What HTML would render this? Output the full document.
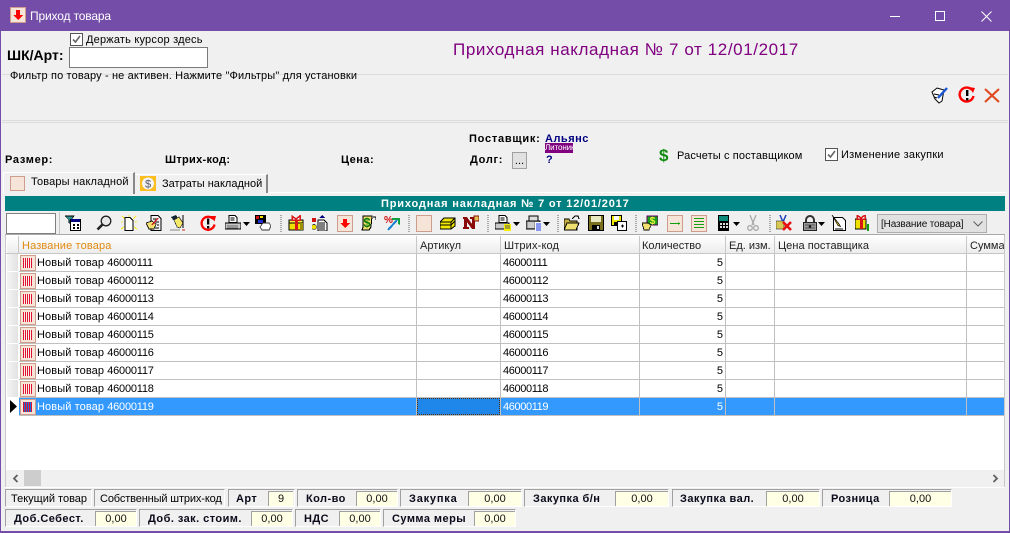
<!DOCTYPE html>
<html><head><meta charset="utf-8"><title>Приход товара</title>
<style>
html,body{margin:0;padding:0;width:1010px;height:533px;overflow:hidden;background:#f0f0f0}
body{position:relative;font:11px/14px "Liberation Sans",sans-serif;color:#000}
.a,.t,svg.i{position:absolute}
.t{white-space:nowrap}
svg.i{width:16px;height:16px;top:215px;shape-rendering:crispEdges}
.b{font-weight:bold}
.l{position:absolute;height:1px;background:#dcdcdc;left:2px;right:2px}
.sep{position:absolute;top:215px;width:2px;height:17px;background:repeating-linear-gradient(#a8a8a8 0 1px,#f0f0f0 1px 2px)}
.btn{position:absolute;top:215px;width:14px;height:15px;border:1px solid #cf9d8b;background:#f6e4d8}
.v{position:absolute;top:254px;width:1px;height:162px;background:#c0c0c0}
.r{position:absolute;left:19px;width:985px;height:1px;background:#c0c0c0}
.ind{position:absolute;left:7px;width:11px;height:17px;background:linear-gradient(90deg,#f4f4f4,#e2e2e2)}
.ic{position:absolute;left:20px;width:14px;height:14px;border:1px solid #cf9d8b;background:#f6e4d8}
.ic:after{content:"";position:absolute;left:2px;top:2px;width:9px;height:10px;background-image:linear-gradient(90deg,#e01030 50%,#f9f0ea 50%);background-size:2px 100%}
.ic.s:after{background-image:linear-gradient(90deg,#e01030 50%,#1e70d8 50%)}
.n{position:absolute;left:37px;letter-spacing:.1px}
.n span{letter-spacing:-.22px}
.c{position:absolute;left:503px;letter-spacing:-.37px}
.q{position:absolute;right:287px;width:20px;text-align:right}
.h{position:absolute;top:239px;color:#222}
.p{position:absolute;box-sizing:border-box;height:18px;border:1px solid;border-color:#a0a0a0 #fff #fff #a0a0a0;background:#f0f0f0}
.pt{position:absolute;white-space:nowrap}
.val{position:absolute;box-sizing:border-box;height:15px;background:#ffffe6;border-top:1px solid #a0a0a0;border-left:1px solid #a0a0a0;text-align:center;line-height:15px;color:#111}
.lb{position:absolute;font-weight:bold;white-space:nowrap;letter-spacing:.45px;color:#0a0a1a}
</style></head><body>

<div class="a" style="left:0;top:0;width:1010px;height:31px;background:#744da9"></div>
<div class="a" style="left:0;top:31px;width:1px;height:502px;background:#744da9"></div>
<div class="a" style="left:1009px;top:31px;width:1px;height:502px;background:#744da9"></div>
<div class="a" style="left:0;top:531px;width:1010px;height:2px;background:#744da9"></div>

<svg class="a" style="left:10px;top:7px" width="16" height="16" viewBox="0 0 16 16" shape-rendering="crispEdges"><rect x=".5" y=".5" width="15" height="15" fill="#f6e4d8" stroke="#cf9d8b"/><path d="M6 3h4v5h3l-5 5-5-5h3z" fill="#f00"/></svg>
<div class="t" style="left:30px;top:9px;font-size:12px;color:#fff;letter-spacing:-.15px">Приход товара</div>
<div class="a" style="left:890px;top:16px;width:10px;height:1px;background:#fff"></div>
<div class="a" style="left:935px;top:11px;width:8px;height:8px;border:1px solid #fff"></div>
<svg class="a" style="left:981px;top:11px" width="11" height="11" viewBox="0 0 11 11"><path d="M.5.5l10 10M10.500.5l-10 10" stroke="#fff" fill="none"/></svg>

<div class="a" style="left:70px;top:33px;width:11px;height:11px;border:1px solid #555;background:#fff"></div>
<svg class="a" style="left:71px;top:34px" width="11" height="11" viewBox="0 0 11 11"><path d="M2 5.500l2.500 2.500 4.500-6" stroke="#666" stroke-width="1.600" fill="none"/></svg>
<div class="t" style="left:86px;top:33px;letter-spacing:.2px">Держать курсор здесь</div>
<div class="t b" style="left:7px;top:48px;font-size:14px">ШК/Арт:</div>
<div class="a" style="left:69px;top:47px;width:137px;height:19px;border:1px solid #7a7a7a;background:#fff"></div>
<div class="t" style="left:453px;top:40px;font-size:17px;line-height:20px;color:#800080;letter-spacing:.6px">Приходная накладная № 7 от 12/01/2017</div>

<div class="l" style="top:74px"></div>
<div class="t" style="left:10px;top:69px;letter-spacing:.14px">Фильтр по товару - не активен. Нажмите "Фильтры" для установки</div>
<div class="l" style="top:120px"></div>
<div class="l" style="top:122px"></div>

<svg class="a" style="left:931px;top:86px" width="18" height="18" viewBox="0 0 18 18"><path d="M1 6l5-4 7 2-2 11-3 2-4-4z" fill="#fff" stroke="#000"/><path d="M7 12l9-10" stroke="#1a55d0" stroke-width="2.400"/><path d="M3 8l5 1M3 11l3 1" stroke="#000"/></svg>
<svg class="a" style="left:958px;top:86px" width="18" height="18" viewBox="0 0 18 18"><path d="M14 4a7 7 0 1 0 1.500 6" fill="none" stroke="#f00" stroke-width="2.400"/><path d="M11 1l6 1-2 5z" fill="#f00"/><path d="M8 4h2.400v6H8zM8 12h2.400v2.400H8z" fill="#000"/></svg>
<svg class="a" style="left:984px;top:88px" width="16" height="15" viewBox="0 0 16 15"><path d="M1 1l14 13M15 1L1 14" stroke="#e04a20" stroke-width="2.200" fill="none"/></svg>

<div class="t b" style="left:469px;top:132px;letter-spacing:.75px">Поставщик:</div>
<div class="t b" style="left:545px;top:132px;color:#000080;letter-spacing:.5px">Альянс</div>
<div class="a" style="left:545px;top:143px;width:28px;height:10px;background:#800080;color:#fff;font-size:8px;line-height:10px;overflow:hidden;white-space:nowrap;letter-spacing:-.1px">Литоник</div>
<div class="t b" style="left:470px;top:153px;letter-spacing:.7px">Долг:</div>
<div class="a" style="left:512px;top:152px;width:13px;height:15px;border:1px solid #a0a0a0;background:#e1e1e1;line-height:17px;text-align:center">...</div>
<div class="t b" style="left:546px;top:153px;color:#000080">?</div>
<div class="t" style="left:659px;top:147px;font-size:17px;line-height:18px;font-weight:bold;color:#108a10">$</div>
<div class="t" style="left:677px;top:149px;letter-spacing:.13px">Расчеты с поставщиком</div>
<div class="a" style="left:825px;top:148px;width:11px;height:11px;border:1px solid #555;background:#fff"></div>
<svg class="a" style="left:826px;top:149px" width="11" height="11" viewBox="0 0 11 11"><path d="M2 5.500l2.500 2.500 4.500-6" stroke="#666" stroke-width="1.600" fill="none"/></svg>
<div class="t" style="left:841px;top:148px;letter-spacing:.24px">Изменение закупки</div>

<div class="t b" style="left:5px;top:153px;letter-spacing:.7px">Размер:</div>
<div class="t b" style="left:165px;top:153px;letter-spacing:.3px">Штрих-код:</div>
<div class="t b" style="left:341px;top:153px;letter-spacing:.5px">Цена:</div>

<div class="a" style="left:3px;top:192px;width:1003px;height:1px;background:#fff"></div>
<div class="a" style="left:134px;top:174px;width:131px;height:18px;background:#f0f0f0;border:1px solid #fff;border-right:2px solid #888;border-bottom:0"></div>
<div class="a" style="left:3px;top:172px;width:129px;height:21px;background:#f0f0f0;border:1px solid #fff;border-right:2px solid #888;border-bottom:0"></div>
<div class="a" style="left:10px;top:176px;width:13px;height:13px;border:1px solid #cf9d8b;background:#f6e4d8"></div>
<div class="t" style="left:31px;top:175px;letter-spacing:.15px">Товары накладной</div>
<svg class="a" style="left:140px;top:176px" width="16" height="16" viewBox="0 0 16 16"><rect width="16" height="15" fill="#fbbe1e"/><circle cx="8" cy="7.500" r="6" fill="#f4f4f4"/><text x="8" y="11.500" text-anchor="middle" font-family="Liberation Sans" font-size="11" fill="#556">$</text></svg>
<div class="t" style="left:162px;top:177px;letter-spacing:.02px">Затраты накладной</div>

<div class="a" style="left:5px;top:196px;width:1000px;height:15px;background:#008080"></div>
<div class="t b" style="left:381px;top:197px;color:#fff;letter-spacing:.82px">Приходная накладная № 7 от 12/01/2017</div>

<div class="a" style="left:6px;top:213px;width:48px;height:19px;border:1px solid #808080;background:#fff"></div>
<div class="a" style="left:59px;top:212px;width:1px;height:22px;background:#c4c4c4"></div>

<!-- toolbar -->
<svg class="i" style="left:65px" viewBox="0 0 16 16"><path d="M0 1h9L6 5v4L4 8V5z" fill="#2f8f8f" stroke="#000" stroke-width=".6"/><rect x="5.500" y="4.500" width="10" height="11" fill="#fff" stroke="#000"/><rect x="6" y="4" width="9" height="3" fill="#000080"/><path d="M8 9h2v2H8zM12 9h2v2h-2zM8 12h2v2H8zM12 12h2v2h-2z" fill="#000"/></svg>
<svg class="i" style="left:96px;shape-rendering:auto" viewBox="0 0 16 16"><circle cx="10" cy="6" r="4.800" fill="#e8e8e8" stroke="#222" stroke-width="1.300"/><path d="M6.500 9.500L1.500 14.500" stroke="#222" stroke-width="2.600"/></svg>
<svg class="i" style="left:121px" viewBox="0 0 16 16"><path d="M1 1l3 3M15 1l-3 3M0 14l3-2M16 14l-3-2M8 0v2M0 7h2M14 7h2" stroke="#f8e820" stroke-width="1.200"/><path d="M4 2.500h5l3 3v10H4z" fill="#fff" stroke="#000"/></svg>
<svg class="i" style="left:146px" viewBox="0 0 16 16"><path d="M5 .5h7l3 3v12H5z" fill="#f0f0f0" stroke="#000"/><path d="M7 4h5M9 7h4M11 10h2M9 13h4" stroke="#000"/><path d="M0 8l6-2 4 3-2 5H3z" fill="#f2e070" stroke="#000" stroke-width=".7"/><path d="M6 10L12 3" stroke="#d02020" stroke-width="1.400"/></svg>
<svg class="i" style="left:170px" viewBox="0 0 16 16"><path d="M1 2l5-2 2 3-4 3z" fill="#123"/><path d="M4 5l5-3 4 6-3 5-3-1z" fill="#f6e868" stroke="#333" stroke-width=".7"/><path d="M13 0v13" stroke="#000"/><path d="M0 15h10" stroke="#888"/><path d="M12 15h3" stroke="#d02020"/></svg>
<svg class="i" style="left:200px;shape-rendering:auto" viewBox="0 0 16 16"><path d="M13 4a6.500 6.500 0 1 0 1.500 5.500" fill="none" stroke="#f00" stroke-width="2.300"/><path d="M10 1l6 0-1.500 5.500z" fill="#f00"/><path d="M7 3.500h2.300v6H7zM7 11h2.300v2.400H7z" fill="#000"/></svg>
<svg class="i" style="left:225px" viewBox="0 0 16 16"><path d="M4 .5h6l2 2v5H4z" fill="#fff" stroke="#000"/><path d="M5.500 3h4M5.500 5h4" stroke="#000"/><path d="M0 8h16v6H0z" fill="#c8c8c8" stroke="#000" stroke-width=".8"/><path d="M2 11h11M2 13h11" stroke="#666"/></svg>
<svg class="a" style="left:243px;top:222px" width="7" height="4"><path d="M0 0h7L3.500 4z"/></svg>
<svg class="i" style="left:255px" viewBox="0 0 16 16"><rect x="0" y="0" width="11" height="9" fill="#000"/><rect x="1" y="1" width="3" height="3" fill="#d01010"/><rect x="5" y="1" width="3" height="2" fill="#f0e000"/><rect x="3" y="5" width="5" height="3" fill="#2030d0"/><path d="M8 8h6l2 3-2 4H7l-2-3z" fill="#fff" stroke="#333" stroke-width=".8"/></svg>
<div class="sep" style="left:280px"></div>
<svg class="i" style="left:288px" viewBox="0 0 16 16"><rect x="1" y="5" width="14" height="10" fill="#f0e000" stroke="#000"/><rect x="1" y="5" width="14" height="3" fill="#f8f040" stroke="#000"/><path d="M7 5h3v10H7z" fill="#d81818"/><path d="M4 1l4 3 4-3v4H4z" fill="none" stroke="#d81818" stroke-width="1.500"/><rect x="12" y="8" width="3" height="7" fill="#a09000"/></svg>
<svg class="i" style="left:312px" viewBox="0 0 16 16"><rect x="0" y="3" width="4" height="4" fill="#d01010"/><circle cx="2" cy="12" r="2.500" fill="#f0e000" stroke="#000" stroke-width=".6"/><path d="M6 5h6l3 3v8H6z" fill="#fff" stroke="#000"/><path d="M7 8h6M7 10h6M7 12h6M7 14h6" stroke="#000"/><path d="M7 3l3-3 3 3z" fill="#000080"/></svg>
<div class="btn" style="left:337px"></div>
<svg class="a" style="left:338px;top:216px" width="14" height="15" viewBox="0 0 14 15" shape-rendering="crispEdges"><path d="M5 3h4v4h3l-5 5-5-5h3z" fill="#f00"/></svg>
<svg class="i" style="left:360px" viewBox="0 0 16 16"><path d="M3 1h9l-1 11-2 3H2l1-3z" fill="#f0e070" stroke="#000"/><path d="M13 2h3v3" fill="none" stroke="#000"/><text x="7" y="12" text-anchor="middle" font-family="Liberation Sans" font-weight="bold" font-size="13" fill="#0a7a0a">$</text></svg>
<svg class="i" style="left:384px" viewBox="0 0 16 16"><text x="0" y="8" font-family="Liberation Sans" font-weight="bold" font-size="10" fill="#d01010">%</text><path d="M4 15L13 5" stroke="#1a80d0" stroke-width="2"/><path d="M8 3h8v7l-2-1V5H8z" fill="#10a040"/></svg>
<div class="sep" style="left:408px"></div>
<div class="btn" style="left:416px"></div>
<svg class="i" style="left:440px" viewBox="0 0 16 16"><path d="M4 3h11v8l-4 3H0V7z" fill="#f0e800" stroke="#000"/><path d="M0 7h11l4-4M0 10h11l4-4" fill="none" stroke="#000"/><path d="M11 7v7" stroke="#000"/></svg>
<svg class="i" style="left:463px" viewBox="0 0 16 16"><path d="M0 2h4l5 7V4H7V2h5v12H9L4 7v5h2v2H0v-2h1V4H0z" fill="#8a0a0a"/><rect x="11" y="1" width="5" height="5" fill="#e0c050" stroke="#8a0a0a"/></svg>
<div class="sep" style="left:487px"></div>
<svg class="i" style="left:495px" viewBox="0 0 16 16"><path d="M4 .5h6l2 2v5H4z" fill="#fff" stroke="#000"/><path d="M5.500 3h4M5.500 5h4" stroke="#000"/><path d="M0 8h14v6H0z" fill="#c8c8c8" stroke="#000" stroke-width=".8"/><rect x="9" y="9" width="7" height="7" fill="#f4f000"/><path d="M10 11h5M10 13h5" stroke="#555"/></svg>
<svg class="a" style="left:513px;top:222px" width="7" height="4"><path d="M0 0h7L3.500 4z"/></svg>
<svg class="i" style="left:526px" viewBox="0 0 16 16"><path d="M3 1h9v5H3z" fill="#ddd" stroke="#000"/><path d="M0 6h14v8H0z" fill="#9a9a9a" stroke="#000" stroke-width=".8"/><path d="M2 8h6M2 10h6M2 12h6" stroke="#fff"/><path d="M9 7h6v9H9z" fill="#fff"/><path d="M10 9h5M10 11h5M10 13h5M10 15h5" stroke="#1030e0"/></svg>
<svg class="a" style="left:543px;top:222px" width="7" height="4"><path d="M0 0h7L3.500 4z"/></svg>
<div class="sep" style="left:557px"></div>
<svg class="i" style="left:564px" viewBox="0 0 16 16"><path d="M0 4h5l1 2h7v9H0z" fill="#c8b040" stroke="#000"/><path d="M0 15l3-7h12l-3 7z" fill="#f0e070" stroke="#000"/><path d="M8 4l3-3h3l1 3" fill="none" stroke="#000"/></svg>
<svg class="i" style="left:588px" viewBox="0 0 16 16"><rect x=".5" y=".5" width="15" height="15" fill="#7a7020" stroke="#000"/><rect x="3" y="1" width="10" height="6" fill="#e8e8c0"/><rect x="4" y="10" width="8" height="5" fill="#000"/><rect x="9" y="11" width="2" height="3" fill="#ddd"/></svg>
<svg class="i" style="left:611px" viewBox="0 0 16 16"><rect x=".5" y=".5" width="10" height="10" fill="#f0e800" stroke="#000"/><rect x="3" y="1" width="5" height="4" fill="#fff"/><rect x="3" y="7" width="5" height="3" fill="#000"/><rect x="6.500" y="6.500" width="9" height="9" fill="#fff" stroke="#000"/><path d="M10 11h3M11.500 9.500v3" stroke="#000"/></svg>
<div class="sep" style="left:635px"></div>
<svg class="i" style="left:642px" viewBox="0 0 16 16"><rect x="5" y="1" width="11" height="9" fill="#18a018" stroke="#600060"/><text x="10.500" y="9" text-anchor="middle" font-family="Liberation Sans" font-weight="bold" font-size="10" fill="#f0f040">$</text><path d="M0 8h6l3 2-2 5H2z" fill="#f2e070" stroke="#000" stroke-width=".8"/></svg>
<div class="btn" style="left:667px"></div>
<svg class="a" style="left:668px;top:216px" width="14" height="15"><path d="M2 7.500h10" stroke="#10a010"/><path d="M10 6l2 1.500-2 1.500z" fill="#10a010"/></svg>
<div class="btn" style="left:691px"></div>
<svg class="a" style="left:692px;top:216px" width="14" height="15"><path d="M2 2.500h10M2 5.500h10M2 8.500h10M2 11.500h10" stroke="#10a010"/></svg>
<svg class="i" style="left:716px" viewBox="0 0 16 16"><rect x="2" y="0" width="11" height="16" fill="#000"/><rect x="3" y="1" width="9" height="5" fill="#0e8a7a"/><path d="M4 8h2v2H4zM7 8h2v2H7zM10 8h2v2h-2zM4 11h2v2H4zM7 11h2v2H7zM10 11h2v2h-2z" fill="#ddd"/></svg>
<svg class="a" style="left:733px;top:222px" width="7" height="4"><path d="M0 0h7L3.500 4z"/></svg>
<svg class="i" style="left:745px;shape-rendering:auto" viewBox="0 0 16 16"><path d="M5 0l4 10M11 0L7 10" stroke="#a8a8a8" stroke-width="1.300" fill="none"/><circle cx="5" cy="13" r="2.300" fill="none" stroke="#a8a8a8" stroke-width="1.300"/><circle cx="11" cy="13" r="2.300" fill="none" stroke="#a8a8a8" stroke-width="1.300"/></svg>
<div class="sep" style="left:769px"></div>
<svg class="i" style="left:776px;shape-rendering:auto" viewBox="0 0 16 16"><path d="M4 0l3 7M10 0L7 7" stroke="#2040c0" stroke-width="1.500"/><rect x="0" y="6" width="8" height="8" fill="#d8c850" stroke="#333" stroke-width=".6"/><path d="M7 7l8 8M15 7l-8 8" stroke="#e81010" stroke-width="2.600"/></svg>
<svg class="i" style="left:802px;shape-rendering:auto" viewBox="0 0 16 16"><path d="M4 8V5a4 4 0 0 1 8 0v3" fill="none" stroke="#333" stroke-width="2"/><rect x="1.500" y="7.500" width="13" height="8" fill="#999" stroke="#222"/><path d="M3 10h10M3 13h10" stroke="#555"/><circle cx="8" cy="11.500" r="1.300" fill="#111"/></svg>
<svg class="a" style="left:818px;top:222px" width="7" height="4"><path d="M0 0h7L3.500 4z"/></svg>
<svg class="i" style="left:831px;shape-rendering:auto" viewBox="0 0 16 16"><path d="M2.500 2.500h9l3 3v10h-12z" fill="#fff" stroke="#000"/><path d="M1 0l7 9 1.500 2.500L7 10.500z" fill="#f0d020" stroke="#000" stroke-width=".7"/><path d="M4 14h8" stroke="#000"/></svg>
<svg class="i" style="left:855px" viewBox="0 0 16 16"><rect x="0" y="4" width="11" height="10" fill="#f0e000" stroke="#000"/><path d="M5 4h3v10H5z" fill="#d81818"/><path d="M2 0l4 3 4-3v4H2z" fill="none" stroke="#d81818" stroke-width="1.500"/><path d="M12 9h2v7h-2z" fill="#10a010"/></svg>

<div class="a" style="left:877px;top:214px;width:108px;height:17px;background:#e1e1e1;border:1px solid #adadad"></div>
<div class="t" style="left:881px;top:218px;font-size:10px;letter-spacing:-.15px;color:#111">[Название товара]</div>
<svg class="a" style="left:973px;top:221px" width="10" height="6"><path d="M.5.500l4.500 4.500L9.500.500" fill="none" stroke="#606060"/></svg>

<!-- grid -->
<div class="a" style="left:5px;top:234px;width:1000px;height:1px;background:#a8a8a8"></div>
<div class="a" style="left:6px;top:235px;width:998px;height:235px;background:#fff"></div>
<div class="a" style="left:7px;top:236px;width:997px;height:18px;background:linear-gradient(#ffffff,#ebebeb)"></div>
<div class="a" style="left:18px;top:236px;width:1px;height:18px;background:#c8c8c8"></div>
<div class="a" style="left:416px;top:236px;width:1px;height:18px;background:#c8c8c8"></div>
<div class="a" style="left:500px;top:236px;width:1px;height:18px;background:#c8c8c8"></div>
<div class="a" style="left:639px;top:236px;width:1px;height:18px;background:#c8c8c8"></div>
<div class="a" style="left:725px;top:236px;width:1px;height:18px;background:#c8c8c8"></div>
<div class="a" style="left:774px;top:236px;width:1px;height:18px;background:#c8c8c8"></div>
<div class="a" style="left:966px;top:236px;width:1px;height:18px;background:#c8c8c8"></div>
<div class="a" style="left:6px;top:253px;width:998px;height:1px;background:#c8c8c8"></div>
<div class="t h" style="left:22px;color:#e08a10;letter-spacing:.15px">Название товара</div>
<div class="t h" style="left:420px">Артикул</div>
<div class="t h" style="left:504px;letter-spacing:.15px">Штрих-код</div>
<div class="t h" style="left:642px">Количество</div>
<div class="t h" style="left:729px">Ед. изм.</div>
<div class="t h" style="left:778px;letter-spacing:.05px">Цена поставщика</div>
<div class="t h" style="left:970px;width:34px;overflow:hidden">Сумма</div>

<div class="ind" style="top:254px"></div><div class="ind" style="top:272px"></div><div class="ind" style="top:290px"></div><div class="ind" style="top:308px"></div><div class="ind" style="top:326px"></div><div class="ind" style="top:344px"></div><div class="ind" style="top:362px"></div><div class="ind" style="top:380px"></div>

<div class="a" style="left:19px;top:398px;width:985px;height:17px;background:#3399ff"></div>
<div class="a" style="left:417px;top:398px;width:81px;height:15px;border:1px dotted #5a3000;background:#1f86ea"></div>

<div class="v" style="left:416px"></div>
<div class="v" style="left:500px"></div>
<div class="v" style="left:639px"></div>
<div class="v" style="left:725px"></div>
<div class="v" style="left:774px"></div>
<div class="v" style="left:966px"></div>

<div class="r" style="top:271px"></div><div class="r" style="top:289px"></div><div class="r" style="top:307px"></div><div class="r" style="top:325px"></div><div class="r" style="top:343px"></div><div class="r" style="top:361px"></div><div class="r" style="top:379px"></div><div class="r" style="top:397px"></div><div class="r" style="top:415px"></div>

<div class="ic" style="top:255px"></div><div class="ic" style="top:273px"></div><div class="ic" style="top:291px"></div><div class="ic" style="top:309px"></div><div class="ic" style="top:327px"></div><div class="ic" style="top:345px"></div><div class="ic" style="top:363px"></div><div class="ic" style="top:381px"></div><div class="ic s" style="top:399px"></div>

<div class="n" style="top:256px">Новый товар <span>46000111</span></div><div class="c" style="top:256px">46000111</div><div class="q" style="top:256px">5</div>
<div class="n" style="top:274px">Новый товар <span>46000112</span></div><div class="c" style="top:274px">46000112</div><div class="q" style="top:274px">5</div>
<div class="n" style="top:292px">Новый товар <span>46000113</span></div><div class="c" style="top:292px">46000113</div><div class="q" style="top:292px">5</div>
<div class="n" style="top:310px">Новый товар <span>46000114</span></div><div class="c" style="top:310px">46000114</div><div class="q" style="top:310px">5</div>
<div class="n" style="top:328px">Новый товар <span>46000115</span></div><div class="c" style="top:328px">46000115</div><div class="q" style="top:328px">5</div>
<div class="n" style="top:346px">Новый товар <span>46000116</span></div><div class="c" style="top:346px">46000116</div><div class="q" style="top:346px">5</div>
<div class="n" style="top:364px">Новый товар <span>46000117</span></div><div class="c" style="top:364px">46000117</div><div class="q" style="top:364px">5</div>
<div class="n" style="top:382px">Новый товар <span>46000118</span></div><div class="c" style="top:382px">46000118</div><div class="q" style="top:382px">5</div>
<div class="n" style="top:400px;color:#fff">Новый товар <span>46000119</span></div><div class="c" style="top:400px;color:#fff">46000119</div><div class="q" style="top:400px;color:#fff">5</div>

<svg class="a" style="left:10px;top:400px" width="7" height="13"><path d="M0 0l7 6.500L0 13z"/></svg>

<!-- scrollbar -->
<div class="a" style="left:7px;top:470px;width:997px;height:17px;background:#f0f0f0"></div>
<div class="a" style="left:24px;top:470px;width:17px;height:16px;background:#cdcdcd"></div>
<svg class="a" style="left:12px;top:474px" width="7" height="9"><path d="M5.500 1L2 4.500 5.500 8" fill="none" stroke="#606060" stroke-width="1.800"/></svg>
<svg class="a" style="left:992px;top:474px" width="7" height="9"><path d="M1.500 1L5 4.500 1.500 8" fill="none" stroke="#606060" stroke-width="1.800"/></svg>
<div class="a" style="left:5px;top:487px;width:1000px;height:1px;background:#fff"></div>
<div class="a" style="left:1004px;top:235px;width:1px;height:252px;background:#c8c8c8"></div>
<div class="a" style="left:5px;top:235px;width:1px;height:252px;background:#c8c8c8"></div>

<!-- bottom panels row 1 -->
<div class="p" style="left:5px;top:489px;width:87px"></div><div class="pt" style="left:11px;top:492px">Текущий товар</div>
<div class="p" style="left:94px;top:489px;width:131px"></div><div class="pt" style="left:100px;top:492px;letter-spacing:-.13px">Собственный штрих-код</div>
<div class="p" style="left:228px;top:489px;width:67px"></div><div class="lb" style="left:236px;top:492px">Арт</div><div class="val" style="left:268px;top:491px;width:25px">9</div>
<div class="p" style="left:297px;top:489px;width:101px"></div><div class="lb" style="left:306px;top:492px">Кол-во</div><div class="val" style="left:356px;top:491px;width:41px">0,00</div>
<div class="p" style="left:400px;top:489px;width:122px"></div><div class="lb" style="left:409px;top:492px;letter-spacing:.8px">Закупка</div><div class="val" style="left:468px;top:491px;width:53px">0,00</div>
<div class="p" style="left:524px;top:489px;width:145px"></div><div class="lb" style="left:533px;top:492px">Закупка б/н</div><div class="val" style="left:615px;top:491px;width:53px">0,00</div>
<div class="p" style="left:672px;top:489px;width:148px"></div><div class="lb" style="left:680px;top:492px">Закупка вал.</div><div class="val" style="left:766px;top:491px;width:53px">0,00</div>
<div class="p" style="left:822px;top:489px;width:130px"></div><div class="lb" style="left:831px;top:492px">Розница</div><div class="val" style="left:889px;top:491px;width:62px">0,00</div>
<!-- row 2 -->
<div class="p" style="left:5px;top:509px;width:132px"></div><div class="lb" style="left:14px;top:512px">Доб.Себест.</div><div class="val" style="left:95px;top:511px;width:41px">0,00</div>
<div class="p" style="left:139px;top:509px;width:154px"></div><div class="lb" style="left:148px;top:512px">Доб. зак. стоим.</div><div class="val" style="left:251px;top:511px;width:41px">0,00</div>
<div class="p" style="left:295px;top:509px;width:86px"></div><div class="lb" style="left:304px;top:512px">НДС</div><div class="val" style="left:339px;top:511px;width:41px">0,00</div>
<div class="p" style="left:383px;top:509px;width:133px"></div><div class="lb" style="left:392px;top:512px">Сумма меры</div><div class="val" style="left:474px;top:511px;width:41px">0,00</div>

</body></html>
